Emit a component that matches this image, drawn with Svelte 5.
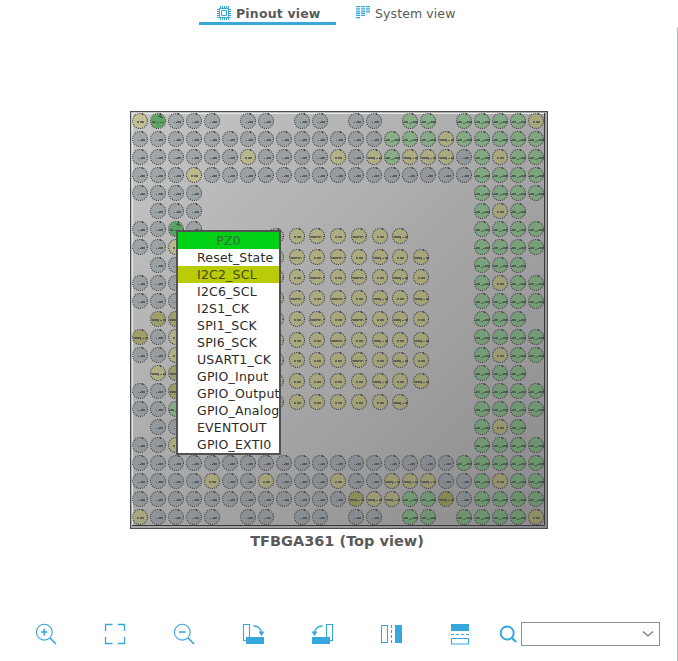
<script>
  const outer = [
    'yGggg.gg.gg.gg.nn.nnnny',
    'ggggggggggggggnnnynnnnn',
    'ggggggyggggygynyyygnynn',
    'gggygggggggggggggggnnnn',
    'gggg...............nnnn',
    '.ggg...............nyn.',
    'ggGg...............nnnn',
    'ggy................nnnn',
    '.gg................nnn.',
    'ggg................nynn',
    'ggg................nnnn',
    '.oo................nnn.',
    'ogy................nnnn',
    'ggy................nynn',
    '.yo................nnn.',
    'ggo................nnnn',
    'ggn................nnnn',
    '.gg................nyn.',
    'ggy................nnnn',
    'ggggggggggggggggggnnnnn',
    'ggggyggygggyggyyyggnynn',
    'ggggggggggggoyynnognnnn',
    'ygggg.gg.gg.gg.nn.nnnny',
  ];
  // s: short ground label, w: wide supply label
  const core = [
    'wswswsw.', 'swswswsw', 'wswswsws', 'swswswsw', 'wswswsws',
    'wsswswsw', 'wssswsws', 'wsssswsw', 'wsssssw.',
  ];
  const marks = {
    g: 'M-2 1.5h1M0 1.5h5M1 .5h4',
    G: 'M-6 1.5h4M-1 1.5h2M2 1.5h4M-6 .5h3M0 -4.5h4M2 -3.5h3M1 -5.5h2',
    s: 'M-3 1.5h2M0 1.5h4M-3 .5h2M0 .5h4',
    w: 'M-7 .5h11M-6 1.5h6M1 1.5h2M4 1.5h1M6 .5h1',
    q: 'M-7 .5h8M-6 1.5h7M2 1.5h2M5 1.5h3M5 .5h2M0 2.5h1',
    n: 'M-7 1.5h5M-6 .5h4M-1 2.5h2M1 1.5h2M3 1.5h5M3 .5h4',
  };
  const wideYellow = (r, i) => r === 1 || r === 14 || (i > 12 && i < 18 && (r === 2 || r > 19));
  const balls = [];
  outer.forEach((row, r) => [...row].forEach((c, i) => {
    if (c === '.') return;
    let m = c;
    if (c === 'o') m = 'q';
    if (c === 'y') m = wideYellow(r, i) ? 'q' : 's';
    balls.push({ x: 10 + i * 18, y: 10 + r * 18, c, m });
  }));
  core.forEach((row, r) => [...row].forEach((k, i) => {
    if (k === '.') return;
    balls.push({ x: Math.round(146 + i * 20.7), y: Math.round(125 + r * 20.7), c: 'y', m: k === 'w' && i > 4 ? 'q' : k });
  }));
  const fills = [
    ['g', '#a4a9ac', '#7b8186'], ['n', '#98bf98', '#668f69'],
    ['y', '#c3c295', '#8e8c63'], ['o', '#a9ad73', '#80804c'], ['G', '#5ca864', '#4f9057'],
  ];
  const options = ['Reset_State', 'I2C2_SCL', 'I2C6_SCL', 'I2S1_CK', 'SPI1_SCK', 'SPI6_SCK', 'USART1_CK', 'GPIO_Input', 'GPIO_Output', 'GPIO_Analog', 'EVENTOUT', 'GPIO_EXTI0'];
  let selected = $state('I2C2_SCL');
</script>

<div class="page">
  <nav>
    <button class="tab active">
      <svg width="14" height="14" viewBox="0 0 14 14" fill="none" stroke="#38a8dc">
        <path d="M2.5 2.5h9v9h-9z" /><path d="M4.5 4.5h5v5h-5z" />
        <path d="M3 1h9M3 13h9" stroke-width="2" stroke-dasharray="1 1" />
        <path d="M1 3v9M13 3v9" stroke-width="2" stroke-dasharray="1 1" />
      </svg>
      <span>Pinout view</span>
    </button>
    <button class="tab second">
      <svg width="14" height="14" viewBox="0 0 14 14" fill="none" stroke="#38a8dc">
        <path d="M2 0v13" stroke-width="4" stroke-dasharray="1.3 .9" />
        <path d="M7 0v10" stroke-width="4" stroke-dasharray="1.3 .9" />
        <path d="M12 0v7" stroke-width="4" stroke-dasharray="1.3 .9" />
      </svg>
      <span>System view</span>
    </button>
  </nav>

  <main>
    <div class="chip">
      <svg width="418" height="418" viewBox="0 0 418 418">
        <defs>
          <linearGradient id="pkg" x1="0" y1="0" x2="1" y2="1">
            <stop offset="0" stop-color="#c6c6c6" /><stop offset="1" stop-color="#8a8a8a" />
          </linearGradient>
          {#each fills as [id, a, b]}
            <linearGradient id={'ball-' + id} gradientUnits="userSpaceOnUse" x1="0" y1="0" x2="418" y2="418">
              <stop offset="0" stop-color={a} /><stop offset="1" stop-color={b} />
            </linearGradient>
          {/each}
        </defs>
        <rect width="418" height="418" fill="url(#pkg)" />
        <path d="M2.5 415V2.5H415" fill="none" stroke="#e4e6e4" />
        <path d="M2 414.5H414.5V2" fill="none" stroke="#383838" />
        <rect x=".5" y=".5" width="417" height="417" fill="none" stroke="#4b4c4e" />
        {#each balls as b}
          <circle cx={b.x} cy={b.y} r="7.2" fill="url(#ball-{b.c})" />
          <circle class="ring" cx={b.x} cy={b.y} r="7.5" />
          <path class="mark" d={marks[b.m]} transform="translate({b.x} {b.y})" />
          <path class="tick" d="M2.5 -8v2" transform="translate({b.x} {b.y})" />
        {/each}
      </svg>
      <div class="menu">
        <div class="head">PZ0</div>
        {#each options as o}
          <button class="item" class:selected={o === selected} onclick={() => (selected = o)}>{o}</button>
        {/each}
      </div>
    </div>
    <div class="caption"><span>TFBGA361 (Top view)</span></div>
  </main>

  <footer>
    <div class="tools">
      <svg viewBox="0 0 24 24"><circle cx="10.3" cy="10.2" r="7.9" /><path d="M16 16l6 6" stroke-width="1.7" /><path d="M7 10h6.5M10.2 6.8v6.5" stroke-width="1.6" /></svg>
      <svg viewBox="0 0 24 24"><path d="M2.5 9V2.5H9.500M15 2.5h6.500V9M21.500 15v6.500H15M9.500 21.500H2.500V15" stroke-width="1.300" /></svg>
      <svg viewBox="0 0 24 24"><circle cx="10.3" cy="10.2" r="7.9" /><path d="M16 16l6 6" stroke-width="1.7" /><path d="M7 10h6.5" stroke-width="1.6" /></svg>
      <svg viewBox="0 0 24 24"><path d="M5 18.500H2.500v-16h6V16" /><path class="solid" d="M5 15h18v7H5zM17.500 9.500h6L20.500 14z" /><path d="M12.500 4C17 4 20.500 7 20.500 11" stroke-width="1.500" /></svg>
      <svg viewBox="0 0 24 24"><path d="M20 18.500h2.500v-16h-6V16" /><path class="solid" d="M2 15h18v7H2zM1.500 9.500h6L4.500 14z" /><path d="M12.500 4C8 4 4.500 7 4.500 11" stroke-width="1.500" /></svg>
      <svg viewBox="0 0 24 24"><path d="M2.500 3.500h6v17h-6z" /><path d="M12.500 3v18" stroke-dasharray="3 2" /><path class="solid" d="M16 3h7v18h-7z" /></svg>
      <svg viewBox="0 0 24 24"><path class="solid" d="M3 2h18v7H3z" /><path d="M3 12.500h18" stroke-dasharray="3 2" /><path d="M3.500 16.500h17v5.500h-17z" /></svg>
    </div>
    <svg class="search" viewBox="0 0 24 24"><circle cx="10.200" cy="11" r="6.500" stroke-width="2" /><path d="M15 16l4 4" stroke-width="2.400" /></svg>
    <div class="combo">
      <svg width="12" height="8" viewBox="0 0 12 8"><path d="M1 1.500l5 4.500 5-4.500" fill="none" stroke="#777" stroke-width="1.200" /></svg>
    </div>
  </footer>
</div>

<style>
  :global(body) { background: #fff; }
  .page {
    position: relative; box-sizing: border-box; width: 678px; height: 661px; overflow: hidden;
    display: flex; flex-direction: column;
    font-family: "DejaVu Sans", Verdana, sans-serif; font-size: 13px; color: #5a5a5a;
  }
  .page::after { content: ''; position: absolute; right: 0; top: 27px; bottom: 0; width: 1px; background: #b7bfc6; }
  button { border: 0; background: none; padding: 0; margin: 0; font: inherit; color: inherit; text-align: left; }
  nav { display: flex; height: 25px; padding-left: 199px; gap: 20px; }
  .tab { display: flex; align-items: flex-start; box-sizing: border-box; height: 25px; padding-top: 6px; }
  .tab span { line-height: 15px; font-size: 12.5px; letter-spacing: .1px; white-space: nowrap; }
  .tab svg { flex: none; }
  .active { width: 137px; padding-left: 18px; gap: 5px; border-bottom: 3px solid #38a8dc; font-weight: bold; }
  .active span { letter-spacing: .18px; }
  .second { gap: 5px; }
  main { display: flex; flex-direction: column; align-items: flex-start; padding: 86px 0 0 130px; }
  .chip { position: relative; width: 418px; height: 418px; }
  .chip svg { display: block; }
  .ring { fill: none; stroke: #404040; stroke-width: 1.1; stroke-dasharray: 1.1 1.044; }
  .mark { stroke: #454747; stroke-width: 1; opacity: .7; fill: none; }
  .tick { stroke: #4a4c4c; fill: none; }
  .menu {
    position: absolute; left: 46px; top: 119px; box-sizing: border-box; width: 105px; height: 225px;
    border: 2px solid #505254; background: #fff; overflow: hidden; line-height: 17px; font-size: 12.5px; letter-spacing: .2px;
  }
  .head { height: 17px; background: #00d016; text-align: center; color: #3d6a3d; }
  .item { display: block; width: 100%; height: 17px; padding-left: 19px; color: #2b2b2b; letter-spacing: .2px; white-space: nowrap; }
  .selected { background: #b9cc06; color: #444a14; }
  .caption { width: 414px; padding-top: 3px; text-align: center; font-size: 14.500px; font-weight: bold; line-height: 18px; }
  footer { display: flex; margin-top: auto; height: 39px; padding-left: 34px; align-items: flex-start; }
  .tools { display: flex; gap: 45px; }
  .tools svg, .search { width: 24px; height: 24px; flex: none; fill: none; stroke: #38a8dc; stroke-width: 1.100; }
  .search { margin-left: 25px; }
  .combo { box-sizing: border-box; width: 139px; height: 24px; border: 1px solid #89929a; display: flex; align-items: center; justify-content: flex-end; padding-right: 5px; }
  .solid { fill: #38a8dc; stroke: none; }
</style>
